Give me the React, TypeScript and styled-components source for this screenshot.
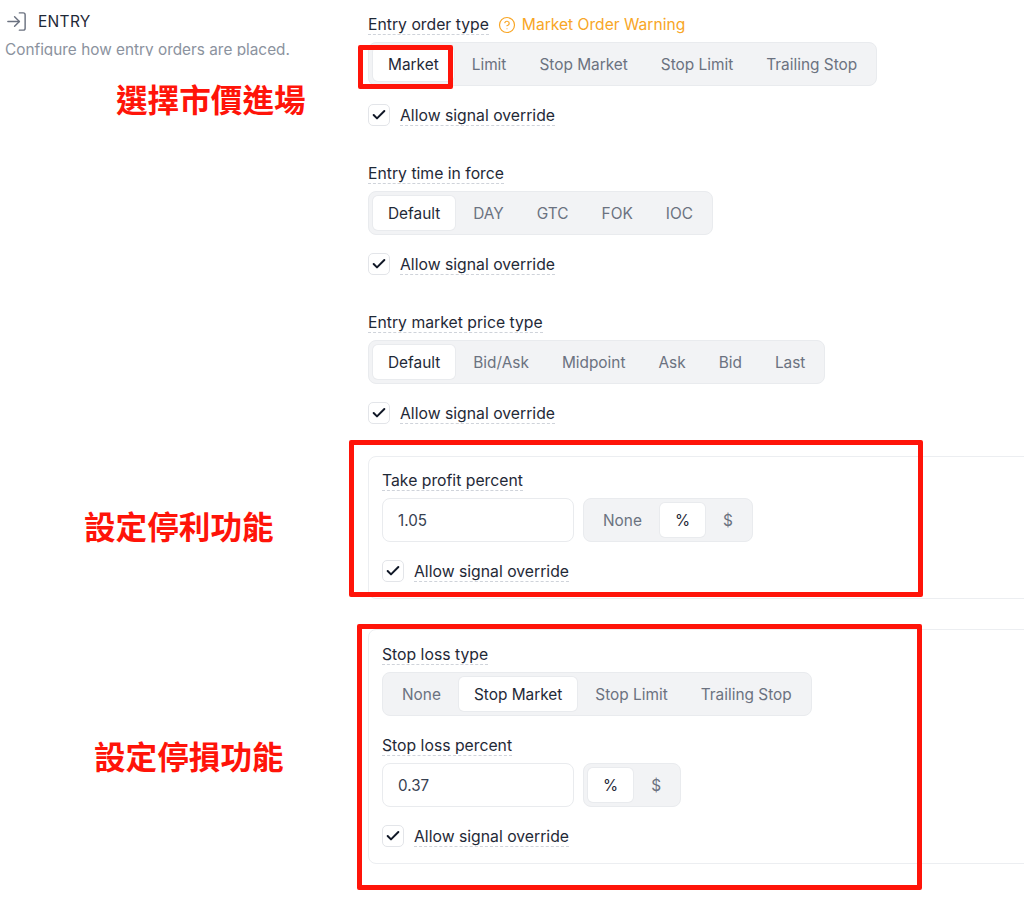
import styled, { createGlobalStyle } from "styled-components";
import { Check, CircleHelp, LogIn } from "lucide-react";

const GlobalStyle = createGlobalStyle`
    html, body {
        margin: 0;
        padding: 0;
        background: #ffffff;
        overflow: hidden;
    }
    body {
        font-family: "Inter", "Noto Sans", sans-serif;
    }
`;

function Segmented({ options, active }: { options: string[]; active: string }) {
    return (
        <SegmentBar>
            {options.map((option) => (
                <SegmentButton key={option} $active={option === active}>
                    {option}
                </SegmentButton>
            ))}
        </SegmentBar>
    );
}

function SignalOverride() {
    return (
        <CheckRow>
            <CheckBox>
                <Check size={16} strokeWidth={3} />
            </CheckBox>
            <CheckLabel>Allow signal override</CheckLabel>
        </CheckRow>
    );
}

function App() {
    return (
        <Page>
            <GlobalStyle />
            <Sidebar>
                <SectionTitle>
                    <SectionIcon>
                        <LogIn size={23} strokeWidth={1.5} />
                    </SectionIcon>
                    ENTRY
                </SectionTitle>
                <SectionHint>Configure how entry orders are placed.</SectionHint>
            </Sidebar>

            <Content>
                <Field>
                    <LabelRow>
                        <DashedLabel>Entry order type</DashedLabel>
                        <Warning>
                            <CircleHelp size={18} strokeWidth={1.6} />
                            Market Order Warning
                        </Warning>
                    </LabelRow>
                    <Segmented
                        options={["Market", "Limit", "Stop Market", "Stop Limit", "Trailing Stop"]}
                        active="Market"
                    />
                    <SignalOverride />
                </Field>

                <Field>
                    <LabelRow>
                        <DashedLabel>Entry time in force</DashedLabel>
                    </LabelRow>
                    <Segmented options={["Default", "DAY", "GTC", "FOK", "IOC"]} active="Default" />
                    <SignalOverride />
                </Field>

                <Field>
                    <LabelRow>
                        <DashedLabel>Entry market price type</DashedLabel>
                    </LabelRow>
                    <Segmented
                        options={["Default", "Bid/Ask", "Midpoint", "Ask", "Bid", "Last"]}
                        active="Default"
                    />
                    <SignalOverride />
                </Field>

                <ProfitCard>
                    <LabelRow>
                        <DashedLabel>Take profit percent</DashedLabel>
                    </LabelRow>
                    <InputRow>
                        <ValueInput>1.05</ValueInput>
                        <Segmented options={["None", "%", "$"]} active="%" />
                    </InputRow>
                    <SignalOverride />
                </ProfitCard>

                <LossCard>
                    <LabelRow>
                        <DashedLabel>Stop loss type</DashedLabel>
                    </LabelRow>
                    <Segmented
                        options={["None", "Stop Market", "Stop Limit", "Trailing Stop"]}
                        active="Stop Market"
                    />
                    <LabelRowSpaced>
                        <DashedLabel>Stop loss percent</DashedLabel>
                    </LabelRowSpaced>
                    <InputRow>
                        <ValueInput>0.37</ValueInput>
                        <Segmented options={["%", "$"]} active="%" />
                    </InputRow>
                    <SignalOverride />
                </LossCard>
            </Content>

            <MarketFrame />
            <ProfitFrame />
            <LossFrame />
            <MarketNote>選擇市價進場</MarketNote>
            <ProfitNote>設定停利功能</ProfitNote>
            <LossNote>設定停損功能</LossNote>
        </Page>
    );
}

// PAGE
const Page = styled.div`
    position: relative;
    display: grid;
    grid-template-columns: 368px 680px;
    width: 1024px;
    height: 918px;
    overflow: hidden;
    padding-top: 14px;
    box-sizing: border-box;
    color: #1f2937;
`;

// LEFT COLUMN
const Sidebar = styled.div`
    display: flex;
    flex-direction: column;
    padding-left: 5px;
    margin-top: -1px;
`;

const SectionTitle = styled.div`
    display: flex;
    align-items: center;
    gap: 10px;
    height: 16px;
    font-size: 15.5px;
    letter-spacing: 0.3px;
    color: #1f2937;
`;

const SectionIcon = styled.span`
    display: flex;
    color: #6b7280;
`;

const SectionHint = styled.div`
    margin-top: 10px;
    height: 17px;
    overflow: hidden;
    font-size: 15.35px;
    line-height: 22px;
    color: #8b929e;
`;

// RIGHT COLUMN
const Content = styled.div`
    display: flex;
    flex-direction: column;
`;

const Field = styled.div`
    display: flex;
    flex-direction: column;
    align-items: flex-start;
    margin-bottom: 37px;

    &:nth-child(3) {
        margin-bottom: 32px;
    }
`;

const LabelRow = styled.div`
    display: flex;
    align-items: flex-end;
    gap: 9px;
    height: 21px;
    margin-bottom: 7px;
`;

const LabelRowSpaced = styled(LabelRow)`
    margin-top: 19px;
`;

const DashedLabel = styled.span`
    font-size: 15.75px;
    line-height: 18px;
    color: #1f2937;
    border-bottom: 1.5px dashed #cfd3da;
`;

const CheckLabel = styled(DashedLabel)`
    margin-top: 2px;
`;

const Warning = styled.span`
    display: flex;
    align-items: center;
    align-self: center;
    gap: 6px;
    font-size: 15.6px;
    color: #f8a626;
`;

const SegmentBar = styled.div`
    display: inline-flex;
    align-items: center;
    gap: 3px;
    height: 44px;
    padding: 0 4px;
    box-sizing: border-box;
    background: #f2f3f5;
    border: 1px solid #e9ebee;
    border-radius: 8px;
`;

const SegmentButton = styled.div<{ $active: boolean }>`
    display: flex;
    align-items: center;
    height: 34px;
    padding: 0 15px;
    font-size: 15.4px;
    border-radius: 5px;
    color: ${(p) => (p.$active ? "#1f2937" : "#6b7280")};
    background: ${(p) => (p.$active ? "#ffffff" : "transparent")};
    box-shadow: ${(p) => (p.$active ? "0 0 0 1px #e9ebee" : "none")};
`;

const CheckRow = styled.div`
    display: flex;
    align-items: center;
    gap: 10px;
    height: 22px;
    margin-top: 18px;
`;

const CheckBox = styled.span`
    display: flex;
    align-items: center;
    justify-content: center;
    width: 22px;
    height: 22px;
    box-sizing: border-box;
    border: 1px solid #e3e5e9;
    border-radius: 5px;
    color: #111827;
`;

const Card = styled.div`
    display: flex;
    flex-direction: column;
    align-items: flex-start;
    box-sizing: border-box;
    padding: 13px 13px 0;
    border: 1px solid #eceef1;
    border-radius: 8px;
`;

const ProfitCard = styled(Card)`
    height: 143px;
    margin-bottom: 30px;
`;

const LossCard = styled(Card)`
    height: 235px;
    padding-top: 14px;
`;

const InputRow = styled.div`
    display: flex;
    gap: 9px;
`;

const ValueInput = styled.div`
    display: flex;
    align-items: center;
    width: 192px;
    height: 44px;
    padding-left: 15px;
    box-sizing: border-box;
    font-size: 15.2px;
    color: #374151;
    border: 1px solid #e9ebee;
    border-radius: 8px;
`;

// RED ANNOTATIONS ON TOP OF THE SCREENSHOT
const Frame = styled.div`
    position: absolute;
    box-sizing: border-box;
    border: 5px solid #ff1409;
    border-radius: 2px;
`;

const MarketFrame = styled(Frame)`
    left: 358px;
    top: 45px;
    width: 95px;
    height: 44px;
`;

const ProfitFrame = styled(Frame)`
    left: 349px;
    top: 440px;
    width: 574px;
    height: 157px;
`;

const LossFrame = styled(Frame)`
    left: 357px;
    top: 624px;
    width: 565px;
    height: 266px;
`;

const Note = styled.div`
    position: absolute;
    font-family: "Noto Sans CJK TC", sans-serif;
    font-weight: 700;
    font-size: 31.6px;
    line-height: 40px;
    white-space: nowrap;
    color: #ff1409;
`;

const MarketNote = styled(Note)`
    left: 116px;
    top: 78px;
`;

const ProfitNote = styled(Note)`
    left: 84px;
    top: 505px;
`;

const LossNote = styled(Note)`
    left: 94px;
    top: 735px;
`;

export default App;
